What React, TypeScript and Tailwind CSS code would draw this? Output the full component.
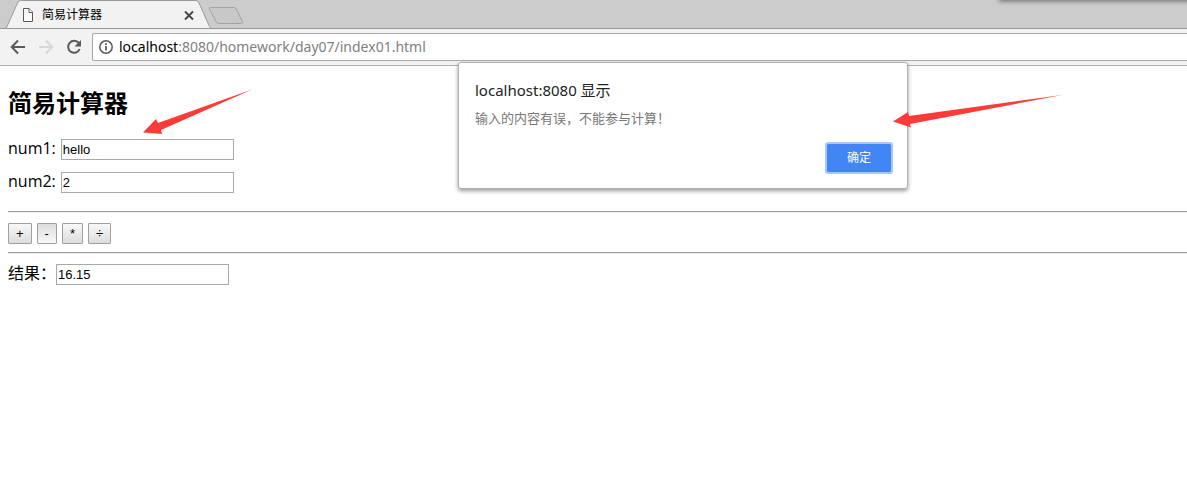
import { useState, type ReactNode } from "react";

const uiFont = "font-['Open_Sans','Noto_Sans_CJK_SC',sans-serif]";
const chromeFont = "font-['Noto_Sans','Noto_Sans_CJK_SC',sans-serif]";
const controlFont = "font-['Liberation_Sans','Noto_Sans_CJK_SC',sans-serif]";

function TabStrip() {
  return (
    <div className="relative h-[29px] overflow-hidden border-b border-[#999999] bg-[#cccccc]">
      <div className="absolute -top-2 -right-4 left-[999px] h-2 shadow-[0_1px_5px_rgba(0,0,0,0.5)]" />
      <svg className="absolute top-0 left-0" width="250" height="29" viewBox="0 0 250 29" fill="none" aria-hidden="true">
        <path d="M5 30L7 26.5L17.500 3Q18.500 .5 20.500 .5H196Q198 .5 199 3L209.500 26.500Q210.500 28.500 212 28.500V30Z" fill="#f2f2f2" />
        <path d="M0 28.500H4.500Q6 28.500 7 26.500L17.500 3Q18.500 .5 20.500 .5H196Q198 .5 199 3L209.500 26.500Q210.500 28.500 212 28.500" stroke="#999" />
        <path d="M210.500 7.500H234Q235.500 7.500 236.300 9L242.500 22Q243.200 23.500 241.500 23.500H218.500Q217 23.500 216.300 22L209.500 9Q209 7.500 210.500 7.500Z" stroke="#a3a3a3" fill="#c8c8c8" />
      </svg>
      <div className="relative flex h-[29px] w-[196px] items-center pl-[22px]">
        <svg width="12" height="14" viewBox="0 0 12 14" fill="#fafafa" stroke="#5a5a5a" aria-hidden="true">
          <path d="M1.500 .5H7L10.500 4V13.500H1.500Z" />
          <path d="M7 .5V4.500H10.500" />
        </svg>
        <span className="flex-1 pl-2 text-[12px] leading-4 text-black">简易计算器</span>
        <button type="button" aria-label="关闭标签页" className="size-[14px]">
          <svg width="14" height="14" viewBox="0 0 14 14" stroke="#444" strokeWidth="1.8" aria-hidden="true">
            <path d="M3 3.500L11 11.500M11 3.500L3 11.500" />
          </svg>
        </button>
      </div>
    </div>
  );
}

function Toolbar() {
  return (
    <div className="flex h-[37px] items-start border-b border-[#b0b0b0] bg-[#f2f2f2] pt-1 pl-[10px]">
      <div className="flex h-7 items-center gap-3">
        <button type="button" aria-label="后退">
          <svg width="16" height="16" viewBox="0 0 16 16" fill="none" stroke="#5a5a5a" strokeWidth="2" aria-hidden="true">
            <path d="M15 8H2.500M8 1.500L1.700 8L8 14.500" />
          </svg>
        </button>
        <button type="button" aria-label="前进" disabled>
          <svg width="16" height="16" viewBox="0 0 16 16" fill="none" stroke="#d8d8d8" strokeWidth="2" aria-hidden="true">
            <path d="M1 8H13.500M8 1.500L14.300 8L8 14.500" />
          </svg>
        </button>
        <button type="button" aria-label="重新加载">
          <svg width="16" height="16" viewBox="0 0 16 16" aria-hidden="true">
            <path d="M12.800 4A6 6 0 1 0 13.700 10" fill="none" stroke="#5a5a5a" strokeWidth="2" />
            <path d="M15 1V7.500H8.500Z" fill="#5a5a5a" />
          </svg>
        </button>
      </div>
      <div className="ml-[10px] flex h-7 flex-1 items-center rounded-l-xs border border-r-0 border-[#a9a9a9] bg-white pl-[6px]">
        <svg width="14" height="14" viewBox="0 0 14 14" fill="none" stroke="#5a5a5a" aria-hidden="true">
          <circle cx="7" cy="7" r="6.200" strokeWidth="1.500" />
          <path d="M7 6V10.500M7 3.300V4.900" strokeWidth="1.800" />
        </svg>
        <div
          role="textbox"
          aria-label="地址"
          contentEditable
          suppressContentEditableWarning
          className={`flex-1 pl-[6px] text-[14px] leading-5 whitespace-nowrap text-[#808080] outline-none ${chromeFont}`}
        >
          <span className="text-black">localhost</span>:8080/homework/day07/index01.html
        </div>
      </div>
    </div>
  );
}

function Field({ id, label, value, onChange, tight }: { id: string; label: string; value: string; onChange: (v: string) => void; tight?: boolean }) {
  return (
    <div className={`flex h-[21px] items-start ${tight ? "gap-0" : "gap-[5px]"}`}>
      <label htmlFor={id} className="text-[16px] leading-[18px] whitespace-nowrap">{label}</label>
      <input
        id={id}
        type="text"
        value={value}
        onChange={(e) => onChange(e.target.value)}
        className={`h-[21px] w-[173px] border border-[#a9a9a9] bg-white px-px text-[13px] text-black ${controlFont}`}
      />
    </div>
  );
}

function Operator({ children, pressed, onClick }: { children: ReactNode; pressed?: boolean; onClick: () => void }) {
  return (
    <button
      type="button"
      onClick={onClick}
      className={`h-[21px] rounded-[1px] border border-[#a0a0a0] px-[7px] text-[13px] leading-4 text-black ${controlFont} ${
        pressed ? "bg-linear-to-b from-[#dddddd] to-[#f8f8f8]" : "bg-linear-to-b from-[#f8f8f8] to-[#dddddd]"
      }`}
    >
      {children}
    </button>
  );
}

function Rule() {
  return <hr className="h-[2px] border-t border-b border-t-[#9a9a9a] border-b-[#eeeeee]" />;
}

function AlertDialog({ onClose }: { onClose: () => void }) {
  return (
    <div
      role="alertdialog"
      aria-labelledby="alert-title"
      aria-describedby="alert-text"
      className="absolute top-[62px] left-[458px] flex w-[450px] flex-col rounded-[3px] border border-[#b0b0b0] bg-white pt-[17px] pr-[14px] pb-[14px] pl-4 shadow-[0_2px_4px_rgba(0,0,0,0.4)]"
    >
      <h2 id="alert-title" className={`text-[15px] leading-5 text-[#222222] ${chromeFont}`}>localhost:8080 显示</h2>
      <p id="alert-text" className="pt-2 text-[13px] leading-5 text-[#777777]">输入的内容有误，不能参与计算！</p>
      <button
        type="button"
        onClick={onClose}
        className="mt-[14px] h-8 w-[68px] self-end rounded-[3px] border-2 border-[#a9c7fb] bg-[#4285f4] bg-clip-padding text-[12px] leading-4 text-white"
      >
        确定
      </button>
    </div>
  );
}

export default function App() {
  const [num1, setNum1] = useState("hello");
  const [num2, setNum2] = useState("2");
  const [result, setResult] = useState("16.15");
  const [alertOpen, setAlertOpen] = useState(true);

  const calculate = (fn: (a: number, b: number) => number) => {
    const value = fn(Number(num1), Number(num2));
    if (Number.isNaN(value)) setAlertOpen(true);
    else setResult(String(value));
  };

  return (
    <div className={`relative min-h-screen overflow-hidden bg-white text-black ${uiFont}`}>
      <TabStrip />
      <Toolbar />
      <main className="pt-[21px] pl-2">
        <h1 className="text-[24px] leading-8 font-bold">简易计算器</h1>
        <div className="flex flex-col gap-3 pt-5 pb-[18px]">
          <Field id="num1" label="num1:" value={num1} onChange={setNum1} />
          <Field id="num2" label="num2:" value={num2} onChange={setNum2} />
        </div>
        <Rule />
        <div className="flex gap-[5px] pt-[10px] pb-2">
          <Operator onClick={() => calculate((a, b) => a + b)}>+</Operator>
          <Operator pressed onClick={() => calculate((a, b) => a - b)}>-</Operator>
          <Operator onClick={() => calculate((a, b) => a * b)}>*</Operator>
          <Operator onClick={() => calculate((a, b) => a / b)}>÷</Operator>
        </div>
        <Rule />
        <div className="pt-[10px]">
          <Field id="result" label="结果：" value={result} onChange={setResult} tight />
        </div>
      </main>
      {alertOpen && <AlertDialog onClose={() => setAlertOpen(false)} />}
      <svg className="pointer-events-none absolute top-[89px] left-[142px]" width="111" height="46" viewBox="0 0 111 46" fill="#fb3b38" aria-hidden="true">
        <path d="M1 43.500L14 30L16 34L110 .5L19 41L20 45Z" />
      </svg>
      <svg className="pointer-events-none absolute top-[94px] left-[892px]" width="172" height="36" viewBox="0 0 172 36" fill="#fb3b38" aria-hidden="true">
        <path d="M1 27.500L16 18L17 22L170 1L18 30L19 33.500Z" />
      </svg>
    </div>
  );
}
